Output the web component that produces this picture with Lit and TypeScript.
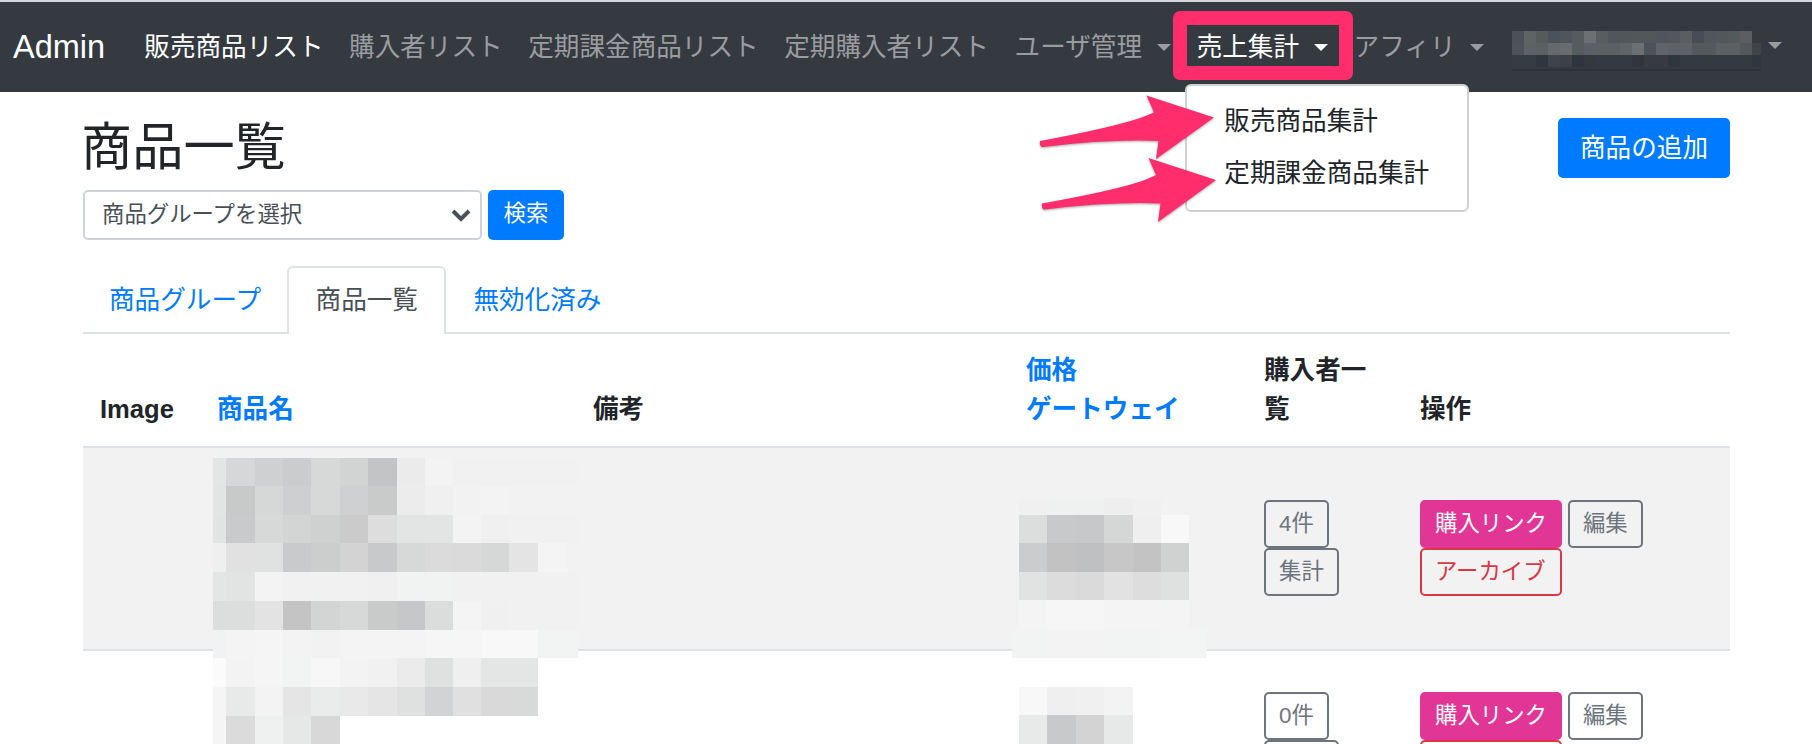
import { LitElement, css, html } from 'lit';
import { customElement } from 'lit/decorators.js';

interface Mosaic {
  x: number;
  y: number;
  cols: number[];
  rows: number[];
  cells: string[];
}

// pixelated censor blocks, painted over the table
const MOSAICS: Mosaic[] = [
  {
    x: 213,
    y: 458,
    cols: [13, 29, 28, 28, 29, 28, 29, 28, 28, 28, 28, 29, 29, 11],
    rows: [28, 29, 28, 29, 29, 29, 28, 29, 29, 29],
    cells: [
      'e4e6e5 d5d7d8 cfd0d2 cbcccd d7d8d8 d2d4d3 c3c4c5 ebebeb f3f3f3 f1f1f1 f1f1f1 f1f1f1 f1f1f1 f1f1f1',
      'e3e5e5 c8cac9 d6d8d7 cdcfd1 d7d9d8 cfd0d2 c9cbca ececec f0f0f0 f2f2f2 f3f3f3 f2f2f2 f2f2f2 f2f2f2',
      'e2e3e3 c9cacc d7d9d8 d3d5d4 cfd1d0 cbcbcc dddddd e3e4e4 e3e5e5 f3f3f3 f0f0f0 f1f1f1 f1f1f1 f1f1f1',
      'efefef e1e1e1 dfe2e1 c9cacc cccece d3d3d3 c8c9cb d7d9d8 dbdbdb dadada d6d8d7 e4e4e4 f4f4f4 f2f2f2',
      'e4e5e5 e1e4e3 f3f3f3 f1f1f1 f1f1f1 f1f1f1 f0f0f0 f1f2f2 f1f3f3 f1f1f1 f1f1f1 f1f1f1 f1f1f1 f1f1f1',
      'dcdddd dcdedd e3e3e3 c4c4c4 d3d5d4 d7d9d8 c9cbca c6c7c9 dbdddc f4f4f4 f0f0f0 f1f1f1 f1f1f1 f1f1f1',
      'f1f3f3 f4f4f4 f5f5f5 f3f3f3 f2f2f2 f4f4f4 f4f4f4 f4f4f4 f6f6f6 f6f6f6 f8f8f8 f8f8f8 f2f4f4 f2f4f4',
      'fbfbfb f3f3f3 f5f5f5 f2f4f4 f7f7f7 f3f3f3 f1f1f1 ebebeb dfe1e0 efefef e4e6e5 e4e6e5 - -',
      'f5f5f5 e8eaea f3f3f3 e5e5e5 eaecec e9e9e9 e5e5e5 dfe1e1 d2d3d5 e0e0e0 d9d9d9 d8dad9 - -',
      'f5f5f5 dbdbdb eff1f1 e6e8e8 d8d8d8 - - - - - - - - -',
    ],
  },
  {
    x: 1019,
    y: 498,
    cols: [28, 29, 28, 29, 28, 28],
    rows: [17, 28, 29, 28, 29],
    cells: [
      'f0f0f0 eff1f1 eff1f1 eeeeee f0f0f0 -',
      'dcdedd c8c9cb c7c8ca d5d7d6 efefef f8f8f8',
      'cbcccd c2c2c2 bfc0c1 c7c7c7 c3c3c3 d0d2d1',
      'e1e3e3 dcdcdc dadada e2e2e2 dddddd dfe1e1',
      'f4f4f4 f6f6f6 f6f6f6 f4f4f4 f4f4f4 f4f4f4',
    ],
  },
  {
    x: 1012,
    y: 629,
    cols: [35, 57, 57, 46],
    rows: [29],
    cells: ['f2f4f4 f3f3f3 f2f4f4 f3f4f4'],
  },
  {
    x: 1019,
    y: 687,
    cols: [28, 29, 28, 29],
    rows: [28, 29],
    cells: ['f8f8f8 efefef f0f0f0 f3f3f3', 'e8eaea c8c9cb d3d3d3 e7e9e9'],
  },
];

const USER_CELLS = [
  '4b5159 5e6366 555a5c 4c525c 4f5559 565b5e 6d7073 585d60 50565a 50565a 52575a 52575a 50555b 53575a 5a5e61 474c55 50565a 52575a 54595c 5b5f61 -',
  '4d535b 5d6265 5b6062 666a6d 686c6f 565b5e 5c6064 5b6063 5b6063 5f6467 6c7073 4c525a 606468 5e6266 5e6266 53595c 55595c 5b6062 5b6062 53585b 3f454c',
  '363c44 363c44 30363e 3e444b 3c4147 2f353d 34393f 343a42 343a42 343a42 30363e 363b42 363b42 30363e 343a42 343a42 343a42 343a42 343a42 343a42 30363e',
];

const NAV_LINKS = ['購入者リスト', '定期課金商品リスト', '定期購入者リスト'];

@customElement('app-root')
export class AppRoot extends LitElement {
  static styles = css`
    :host {
      display: block;
      position: relative;
      height: 744px;
      overflow: hidden;
      background: #fff;
      color: #212529;
      font-family: 'Liberation Sans', 'Noto Sans CJK JP', sans-serif;
      font-size: 25.6px;
      line-height: 38.4px;
    }
    .strip {
      height: 2px;
      background: #d8d9da;
    }
    .navbar {
      display: flex;
      align-items: center;
      height: 90px;
      padding: 0 13px;
      background: #343a40;
    }
    .brand {
      margin-right: 26.4px;
      color: #fff;
      font-size: 32.5px;
    }
    .nav-link {
      position: relative;
      display: flex;
      align-items: center;
      padding: 0 12.8px;
      color: #9a9c9f;
      white-space: nowrap;
    }
    .nav-link.active {
      color: #fff;
    }
    .caret {
      width: 0;
      height: 0;
      margin-left: 15px;
      border-top: 7.7px solid currentColor;
      border-left: 7.7px solid transparent;
      border-right: 7.7px solid transparent;
    }
    .user-blur {
      display: grid;
      grid-template-columns: repeat(20, 12px) 9px;
      grid-auto-rows: 12px;
      width: 249px;
      height: 38px;
      margin-top: 8px;
      margin-left: 2px;
      border-bottom: 2px solid #2e3339;
    }
    .user-caret {
      margin-left: 7px;
      margin-top: -3px;
    }
    .menu {
      position: absolute;
      top: 56px;
      left: 1.5px;
      z-index: 2;
      box-sizing: border-box;
      width: 284px;
      height: 128px;
      padding-top: 10px;
      border: 2px solid #d0d1d2;
      border-radius: 6px;
      background: #fff;
      color: #212529;
    }
    .menu div {
      padding: 6.4px 37px 7.4px;
    }
    .highlight {
      position: absolute;
      top: 11px;
      left: 1173px;
      box-sizing: border-box;
      width: 180px;
      height: 69px;
      border: 14px solid #ff2d6b;
      border-radius: 7px;
    }
    .arrows {
      position: absolute;
      top: 0;
      left: 0;
      z-index: 3;
      pointer-events: none;
      filter: drop-shadow(0 1px 1px rgba(0, 0, 0, 0.35));
    }
    main {
      padding: 25px 82px 0 83px;
    }
    .head {
      display: flex;
      justify-content: space-between;
      align-items: flex-start;
    }
    h2 {
      margin: 0 0 12px -2px;
      font-size: 51.2px;
      font-weight: 400;
      line-height: 61px;
    }
    .filter {
      display: flex;
      gap: 6px;
    }
    .select {
      box-sizing: border-box;
      display: flex;
      align-items: center;
      justify-content: space-between;
      width: 399px;
      height: 50px;
      padding: 0 8px 0 17px;
      border: 2px solid #ced4da;
      border-radius: 5px;
      color: #495057;
      font-size: 22.4px;
    }
    .btn {
      box-sizing: border-box;
      border: 2px solid transparent;
      border-radius: 5px;
      font-size: 22.4px;
      line-height: 34px;
      padding: 5px 13px;
      white-space: nowrap;
    }
    .btn-primary {
      background: #007bff;
      color: #fff;
    }
    .search {
      width: 76px;
      height: 50px;
      padding: 5px 0;
      text-align: center;
    }
    .add {
      width: 172px;
      height: 60px;
      margin-top: 1px;
      padding: 10px 0;
      font-size: 25.6px;
      line-height: 36px;
      text-align: center;
    }
    .tabs {
      display: flex;
      margin-top: 26px;
      border-bottom: 2px solid #dee2e6;
    }
    .tab {
      box-sizing: border-box;
      height: 66px;
      margin-bottom: -2px;
      padding: 12.8px 24px;
      border: 2px solid transparent;
      border-bottom: 0;
      border-radius: 6px 6px 0 0;
      color: #007bff;
    }
    .tab.active {
      height: 68px;
      padding: 12.8px 26.5px;
      background: #fff;
      border-color: #dee2e6;
      color: #495057;
    }
    .tab.active + .tab {
      padding-left: 25px;
    }
    table {
      width: 1647px;
      border-collapse: collapse;
      table-layout: fixed;
    }
    th,
    td {
      padding: 0 17px;
      text-align: left;
    }
    th {
      height: 113px;
      padding-bottom: 18px;
      box-sizing: border-box;
      border-bottom: 2px solid #dee2e6;
      vertical-align: bottom;
      font-weight: 700;
    }
    th a {
      color: #007bff;
    }
    td {
      border-bottom: 2px solid #dee2e6;
      vertical-align: middle;
    }
    tr.striped td {
      height: 201px;
      background: #f2f2f2;
    }
    tr.striped .actions {
      margin-bottom: 2px;
    }
    tr.plain td {
      height: 178px;
    }
    .actions {
      display: flex;
      flex-wrap: wrap;
      column-gap: 6px;
    }
    .btn-outline {
      border-color: #6c757d;
      color: #6c757d;
    }
    .btn-pink {
      background: #e23696;
      color: #fff;
    }
    .btn-danger {
      width: 142px;
      border-color: #dc3545;
      color: #dc3545;
    }
    .mosaic {
      position: absolute;
      display: grid;
      z-index: 1;
    }
  `;

  private renderCaret() {
    return html`<span class="caret"></span>`;
  }

  private renderMosaic(m: Mosaic) {
    const cells = m.cells.flatMap((row) => row.split(' '));
    const style = `left:${m.x}px;top:${m.y}px;grid-template-columns:${m.cols
      .map((c) => c + 'px')
      .join(' ')};grid-template-rows:${m.rows.map((r) => r + 'px').join(' ')}`;
    return html`<div class="mosaic" style=${style}>
      ${cells.map((c) => html`<span style=${c === '-' ? '' : `background:#${c}`}></span>`)}
    </div>`;
  }

  private renderRow(rowClass: string, count: string) {
    return html`<tr class=${rowClass}>
      <td></td>
      <td></td>
      <td></td>
      <td></td>
      <td>
        <div class="actions">
          <span class="btn btn-outline">${count}</span>
          <span class="btn btn-outline">集計</span>
        </div>
      </td>
      <td>
        <div class="actions">
          <span class="btn btn-pink">購入リンク</span>
          <span class="btn btn-outline">編集</span>
          <span class="btn btn-danger">アーカイブ</span>
        </div>
      </td>
    </tr>`;
  }

  render() {
    const userCells = USER_CELLS.flatMap((row) => row.split(' '));
    return html`
      <div class="strip"></div>
      <nav class="navbar">
        <span class="brand">Admin</span>
        <span class="nav-link active">販売商品リスト</span>
        ${NAV_LINKS.map((l) => html`<span class="nav-link">${l}</span>`)}
        <span class="nav-link">ユーザ管理${this.renderCaret()}</span>
        <span class="nav-link active">
          売上集計${this.renderCaret()}
          <div class="menu">
            <div>販売商品集計</div>
            <div>定期課金商品集計</div>
          </div>
        </span>
        <span class="nav-link">アフィリ${this.renderCaret()}</span>
        <span class="nav-link">
          <span class="user-blur">
            ${userCells.map((c) => html`<span style=${c === '-' ? '' : `background:#${c}`}></span>`)}
          </span>
          <span class="caret user-caret"></span>
        </span>
      </nav>
      <main>
        <div class="head">
          <div>
            <h2>商品一覧</h2>
            <div class="filter">
              <div class="select">
                商品グループを選択
                <svg width="22" height="14" viewBox="0 0 22 14">
                  <path d="M3 3l8 8 8-8" fill="none" stroke="#495057" stroke-width="4" />
                </svg>
              </div>
              <span class="btn btn-primary search">検索</span>
            </div>
          </div>
          <span class="btn btn-primary add">商品の追加</span>
        </div>
        <div class="tabs">
          <span class="tab">商品グループ</span>
          <span class="tab active">商品一覧</span>
          <span class="tab">無効化済み</span>
        </div>
        <table>
          <colgroup>
            <col style="width:117px" />
            <col style="width:376px" />
            <col style="width:433px" />
            <col style="width:238px" />
            <col style="width:156px" />
            <col style="width:327px" />
          </colgroup>
          <thead>
            <tr>
              <th>Image</th>
              <th><a>商品名</a></th>
              <th>備考</th>
              <th><a>価格</a><br /><a>ゲートウェイ</a></th>
              <th>購入者一覧</th>
              <th>操作</th>
            </tr>
          </thead>
          <tbody>
            ${this.renderRow('striped', '4件')} ${this.renderRow('plain', '0件')}
          </tbody>
        </table>
      </main>
      ${MOSAICS.map((m) => this.renderMosaic(m))}
      <div class="highlight"></div>
      <svg class="arrows" width="1812" height="744" viewBox="0 0 1812 744" fill="#ff2d6b">
        <path
          d="M1040 141 Q1110 128 1140 118 Q1150 114 1154 112.5 L1146.5 95.5 L1214 117.5 L1156 159 L1158.5 141 Q1110 139 1043 147 Q1039 147 1040 141Z"
        />
        <path
          d="M1042 203.5 Q1112 191 1142 181 Q1152 177 1156 175 L1148.5 158 L1216 180 L1158 222 L1160.5 203.5 Q1112 201.5 1045 209.5 Q1041 209.5 1042 203.5Z"
        />
      </svg>
    `;
  }
}

declare global {
  interface HTMLElementTagNameMap {
    'app-root': AppRoot;
  }
}
